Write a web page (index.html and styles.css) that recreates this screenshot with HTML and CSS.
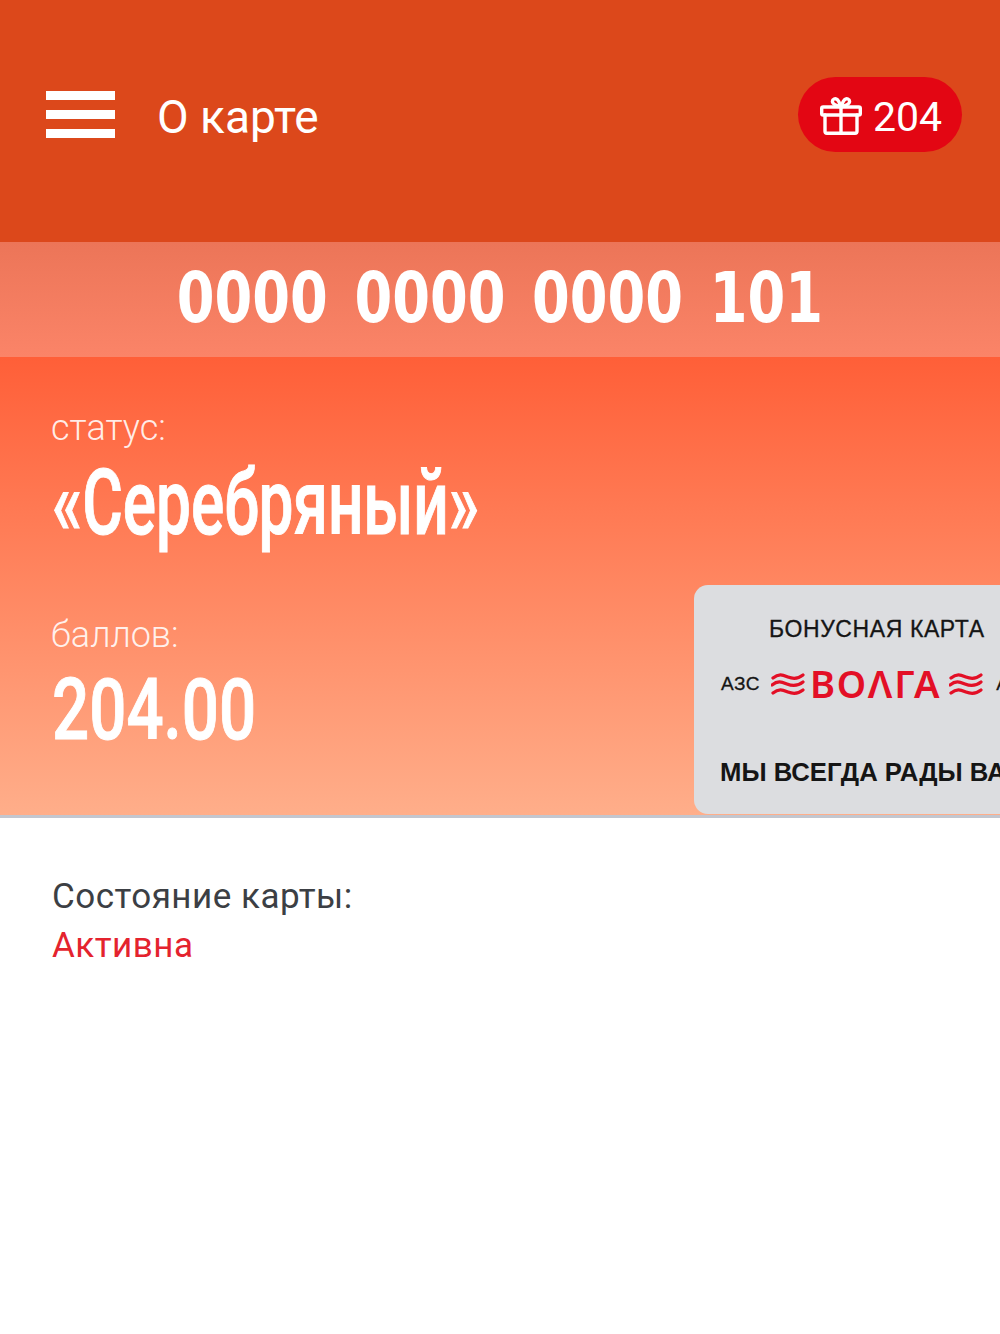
FILE: index.html
```html
<!DOCTYPE html>
<html lang="ru">
<head>
    <meta charset="UTF-8">
    <meta name="viewport" content="width=device-width, initial-scale=1.0">
    <title>О карте</title>
    <link rel="stylesheet" href="styles.css">
</head>
<body>
    <header class="topbar">
        <div class="menu-icon"><span></span><span></span><span></span></div>
        <div class="topbar-title">О карте</div>
        <div class="bonus-badge">
            <svg class="gift-icon" viewBox="0 0 42 38" fill="none" stroke="#fff" stroke-width="3.4" stroke-linejoin="round" stroke-linecap="round">
                <rect x="1.7" y="10" width="38.600" height="8" rx="1.500"/>
                <path d="M5 18v16.300a2 2 0 0 0 2 2h28a2 2 0 0 0 2-2V18"/>
                <path d="M21 10v26.300"/>
                <path d="M21 10c-3-1-8-2-8.500-5C12 2 15.500 .8 17.500 2.800c1.800 1.800 2.500 4.700 3.500 7.200c1-2.500 1.700-5.400 3.500-7.200C26.500 .8 30 2 29.500 5C29 8 24 9 21 10z"/>
            </svg>
            <span>204</span>
        </div>
    </header>

    <div class="card-number"><span>0000 0000 0000 101</span></div>

    <section class="hero">
        <div class="hero-info">
            <div class="hero-label">статус:</div>
            <div class="hero-value status-value"><span>«Серебряный»</span></div>
            <div class="hero-label points-label">баллов:</div>
            <div class="hero-value points-value"><span>204.00</span></div>
        </div>
        <div class="bonus-card">
            <div class="bonus-card-title">БОНУСНАЯ КАРТА</div>
            <div class="bonus-card-logo">
                <span class="azs">АЗС</span>
                <svg class="waves" viewBox="0 0 34 26" fill="none" stroke="#e30f26" stroke-width="3.200" stroke-linecap="round">
                    <path d="M2 7c6-5 10-3 15-1s10 2 15-2"/>
                    <path d="M1 14c6-5 10-3 15-1s11 2 16-2"/>
                    <path d="M2 22c6-5 10-3 15-1s10 2 15-2"/>
                </svg>
                <span class="logo-word">ВОΛГА</span>
                <svg class="waves waves-right" viewBox="0 0 34 26" fill="none" stroke="#e30f26" stroke-width="3.200" stroke-linecap="round">
                    <path d="M2 7c6-5 10-3 15-1s10 2 15-2"/>
                    <path d="M1 14c6-5 10-3 15-1s11 2 16-2"/>
                    <path d="M2 22c6-5 10-3 15-1s10 2 15-2"/>
                </svg>
                <span class="azs">АЗС</span>
            </div>
            <div class="bonus-card-slogan">МЫ ВСЕГДА РАДЫ ВАМ</div>
        </div>
    </section>

    <section class="details">
        <div class="details-label">Состояние карты:</div>
        <div class="details-value">Активна</div>
    </section>
</body>
</html>
```

FILE: styles.css
```css
body {
    margin: 0;
    height: 1334px;
    overflow: hidden;
    background: #fff;
    font-family: Roboto, "Noto Sans", sans-serif;
}

.topbar {
    height: 242px;
    box-sizing: border-box;
    padding: 77px 38px 0 46px;
    display: flex;
    align-items: flex-start;
    background: #dc481b;
    color: #fff;
}
.menu-icon {
    width: 69px;
    height: 47px;
    margin-top: 14px;
    display: flex;
    flex-direction: column;
    justify-content: space-between;
}
.menu-icon span {
    display: block;
    height: 9px;
    background: #fff;
}
.topbar-title {
    margin-left: 42px;
    font-size: 46px;
    line-height: 80px;
    flex: 1;
}
.bonus-badge {
    width: 164px;
    height: 75px;
    box-sizing: border-box;
    padding-left: 22px;
    display: flex;
    align-items: center;
    gap: 11px;
    border-radius: 38px;
    background: #e30613;
    font-size: 41px;
}
.bonus-badge span {
    padding-top: 5px;
}
.gift-icon {
    width: 42px;
    height: 38px;
    flex-shrink: 0;
    margin-top: 2px;
}

.card-number {
    height: 115px;
    padding-bottom: 4px;
    box-sizing: border-box;
    display: flex;
    align-items: center;
    justify-content: center;
    background: linear-gradient(#ec7558, #fb8468);
    overflow: hidden;
}
.card-number span {
    color: #fff;
    font-family: "DejaVu Sans", sans-serif;
    font-size: 70px;
    font-weight: 700;
    word-spacing: 10px;
    white-space: nowrap;
    transform: scaleX(0.775);
}

.hero {
    height: 458px;
    display: flex;
    justify-content: space-between;
    background: linear-gradient(#ff5f38, #ffae8a);
    border-bottom: 3px solid #c3c6cf;
    overflow: hidden;
}
.hero-info {
    padding: 51px 0 0 51px;
}
.hero-label {
    font-size: 36px;
    font-weight: 300;
    line-height: 40px;
    color: rgba(255, 255, 255, 0.88);
}
.points-label {
    margin-top: 61px;
}
.hero-value {
    margin-left: 1px;
    color: #fff;
    font-weight: 500;
    white-space: nowrap;
    -webkit-text-stroke: 1px #fff;
}
.hero-value span {
    display: inline-block;
    transform-origin: left center;
}
.status-value {
    margin-top: 6px;
    font-size: 90px;
    line-height: 100px;
}
.status-value span {
    transform: scaleX(0.69);
}
.points-value {
    margin-top: 5px;
    font-size: 85px;
    line-height: 100px;
}
.points-value span {
    transform: scaleX(0.77);
}

.bonus-card {
    width: 306px;
    height: 229px;
    margin-top: 228px;
    box-sizing: border-box;
    padding: 30px 0 0 26px;
    flex-shrink: 0;
    overflow: hidden;
    white-space: nowrap;
    border-radius: 14px 0 0 14px;
    background: #dcdde0;
    color: #151515;
    font-family: "Liberation Sans", Arial, sans-serif;
}
.bonus-card-title {
    margin-left: 49px;
    font-size: 23px;
    line-height: 28px;
    letter-spacing: 0.6px;
    -webkit-text-stroke: 0.3px #151515;
}
.bonus-card-logo {
    margin-top: 16px;
    height: 50px;
    display: flex;
    align-items: center;
}
.azs {
    margin-left: 1px;
    font-size: 19px;
    letter-spacing: 0.5px;
    -webkit-text-stroke: 0.3px #151515;
}
.waves {
    width: 34px;
    height: 26px;
    flex-shrink: 0;
    margin: 0 5px 0 11px;
}
.waves-right {
    margin: 0 12px 0 8px;
}
.logo-word {
    margin-top: -2px;
    font-family: "Noto Sans", sans-serif;
    font-size: 38px;
    font-weight: 600;
    letter-spacing: 1.8px;
    color: #e30f26;
}
.bonus-card-slogan {
    margin-top: 48px;
    font-size: 25.700px;
    font-weight: 700;
    line-height: 30px;
}

.details {
    padding: 54px 52px 0;
    font-size: 35px;
    line-height: 49px;
    letter-spacing: 0.5px;
}
.details-label {
    color: #3c3f44;
}
.details-value {
    color: #e4232e;
}
```
